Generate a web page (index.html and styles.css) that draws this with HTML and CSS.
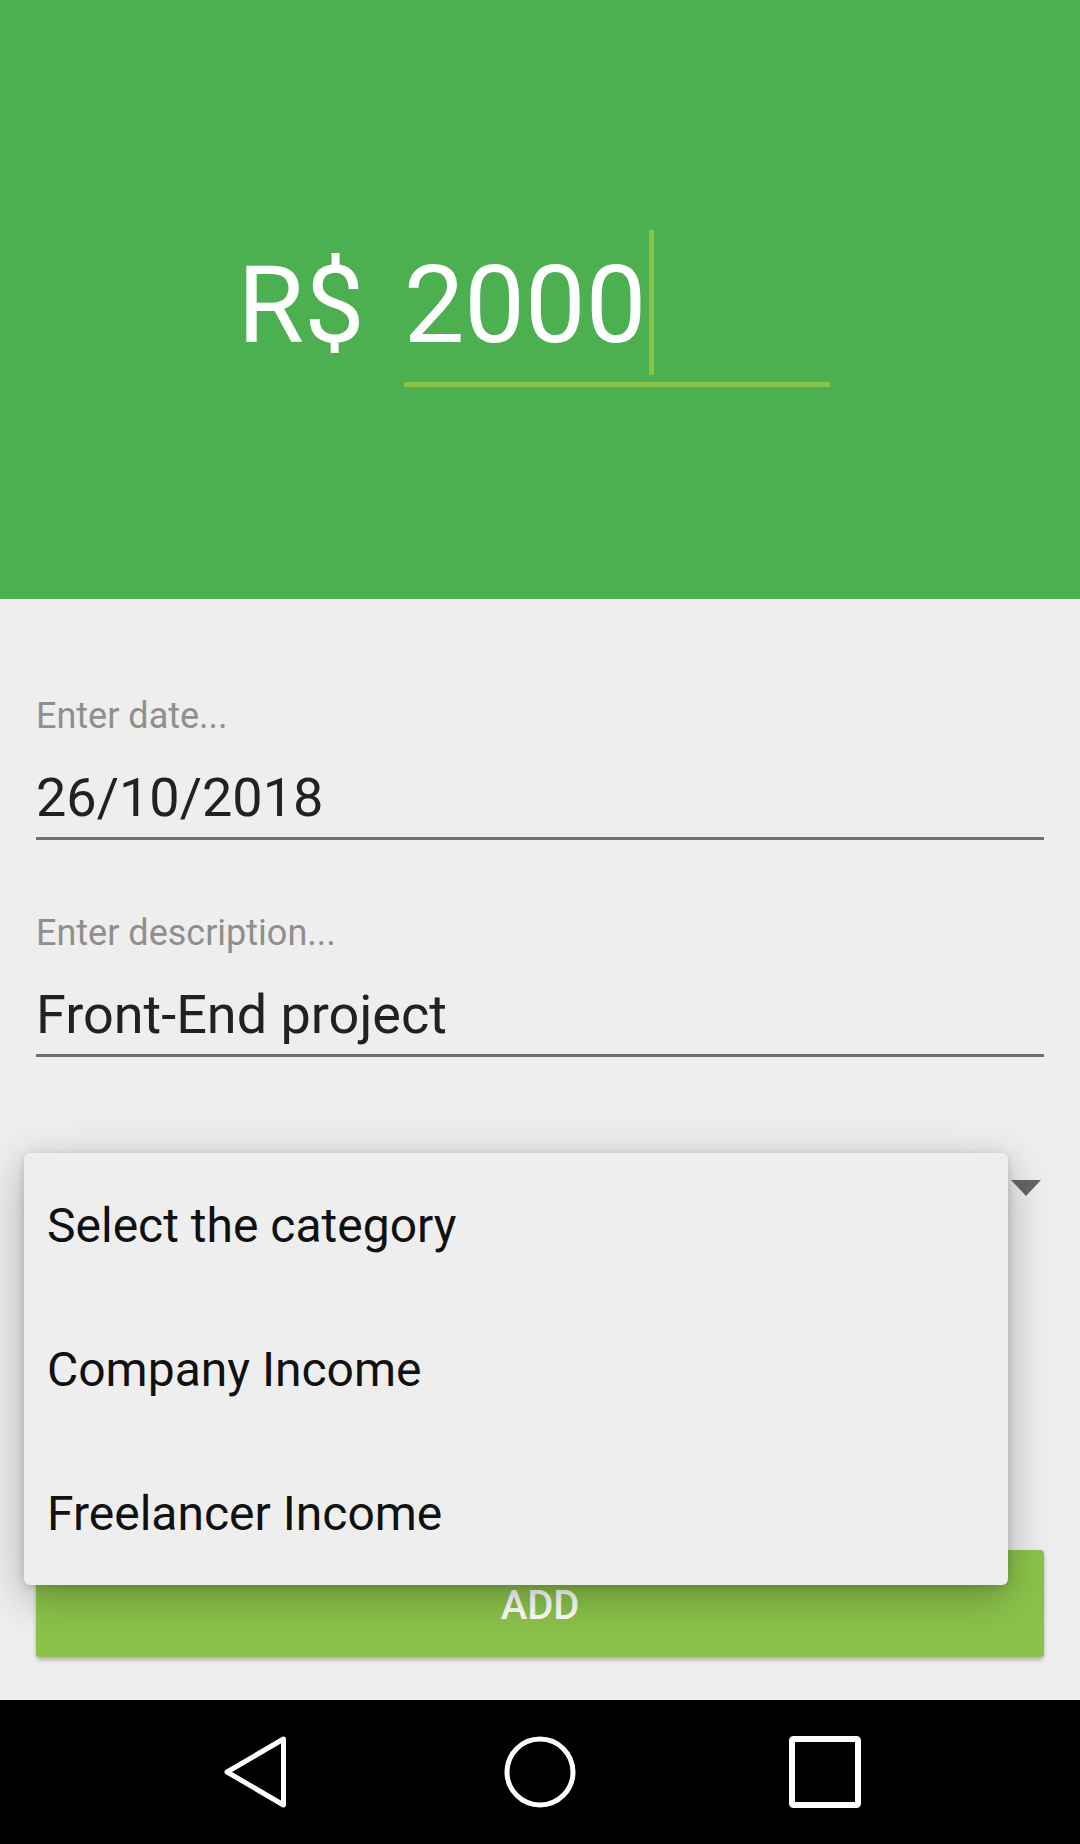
FILE: index.html
```html
<!DOCTYPE html>
<html>
<head>
<meta charset="utf-8">
<link rel="stylesheet" href="styles.css">
</head>
<body>
<div class="screen">
  <header class="header">
    <div class="amount-row">
      <span class="currency">R$</span>
      <div class="amount-input"><span class="amount-value">2000</span><span class="caret"></span></div>
    </div>
  </header>
  <main class="form">
    <div class="field">
      <div class="field-label">Enter date...</div>
      <div class="field-value">26/10/2018</div>
    </div>
    <div class="field field-gap">
      <div class="field-label">Enter description...</div>
      <div class="field-value">Front-End project</div>
    </div>
    <div class="spinner">
      <span class="spinner-arrow"></span>
      <ul class="dropdown">
        <li class="dropdown-item">Select the category</li>
        <li class="dropdown-item">Company Income</li>
        <li class="dropdown-item">Freelancer Income</li>
      </ul>
    </div>
    <button class="add-btn">ADD</button>
  </main>
  <nav class="navbar">
    <div class="nav-cell">
      <svg class="nav-icon" width="70" height="80" viewBox="0 0 70 80"><polygon points="63.5,7 7,40 63.5,73" fill="none" stroke="#fff" stroke-width="5" stroke-linejoin="round"/></svg>
    </div>
    <div class="nav-cell">
      <svg class="nav-icon" width="80" height="80" viewBox="0 0 80 80"><circle cx="40" cy="40" r="33" fill="none" stroke="#fff" stroke-width="5"/></svg>
    </div>
    <div class="nav-cell">
      <svg class="nav-icon" width="80" height="80" viewBox="0 0 80 80"><rect x="7" y="7" width="66" height="66" rx="1.5" fill="none" stroke="#fff" stroke-width="6"/></svg>
    </div>
  </nav>
</div>
</body>
</html>
```
FILE: styles.css
```css
* { box-sizing: border-box; }
html, body { margin: 0; padding: 0; }
body {
  width: 1080px;
  height: 1844px;
  background: #eeeeee;
  font-family: Roboto, "Noto Sans", "Liberation Sans", sans-serif;
  overflow: hidden;
}
.screen {
  display: flex;
  flex-direction: column;
  width: 1080px;
  height: 1844px;
}
.header {
  height: 599px;
  flex: 0 0 599px;
  background: #4caf50;
  display: flex;
  justify-content: center;
  align-items: flex-start;
  padding-top: 241px;
}
.amount-row {
  display: flex;
  align-items: flex-start;
  gap: 39px;
  margin-right: 13px;
}
.currency {
  font-size: 108px;
  line-height: 128px;
  color: #ffffff;
}
.amount-input {
  width: 426px;
  display: flex;
  align-items: flex-start;
  padding-bottom: 7px;
  border-bottom: 5px solid #8bc34a;
}
.amount-value {
  font-size: 108px;
  line-height: 128px;
  color: #ffffff;
}
.caret {
  width: 5px;
  height: 145px;
  margin-top: -11px;
  margin-left: 3px;
  background: #8bc34a;
}
.form {
  flex: 1;
  padding: 96px 36px 0;
}
.field {
  display: flex;
  flex-direction: column;
}
.field-gap { margin-top: 72px; }
.field-label {
  font-size: 36px;
  line-height: 42px;
  color: #8f8f8f;
  margin-bottom: 29px;
}
.field-value {
  font-size: 54px;
  line-height: 64px;
  color: #212121;
  padding-bottom: 7px;
  border-bottom: 3px solid #6f6f6f;
}
.spinner {
  position: relative;
  margin-top: 81px;
  height: 100px;
  display: flex;
  align-items: center;
  justify-content: flex-end;
}
.spinner-arrow {
  width: 0;
  height: 0;
  border-left: 15px solid transparent;
  border-right: 15px solid transparent;
  border-top: 16px solid #666666;
  margin-right: 3px;
}
.dropdown {
  position: absolute;
  top: 15px;
  left: -12px;
  width: 984px;
  margin: 0;
  padding: 0;
  list-style: none;
  background: #eeeeee;
  border-radius: 6px;
  box-shadow: 0 12px 44px rgba(0, 0, 0, 0.28), 0 2px 8px rgba(0, 0, 0, 0.15);
  z-index: 5;
}
.dropdown-item {
  height: 144px;
  display: flex;
  align-items: center;
  padding-left: 23px;
  font-size: 48px;
  color: #111111;
}
.add-btn {
  display: block;
  width: 100%;
  height: 107px;
  margin-top: 312px;
  padding: 4px 0 0;
  border: none;
  border-radius: 4px;
  background: #8bc34a;
  color: #ffffff;
  font-family: Roboto, "Noto Sans", sans-serif;
  font-weight: 500;
  font-size: 40px;
  box-shadow: 0 3px 4px rgba(0, 0, 0, 0.25);
}
.navbar {
  flex: 0 0 144px;
  height: 144px;
  background: #000000;
  display: grid;
  grid-template-columns: repeat(3, 285px);
  justify-content: center;
  align-items: center;
}
.nav-cell {
  display: flex;
  justify-content: center;
  align-items: center;
}
.nav-icon { display: block; }
```
